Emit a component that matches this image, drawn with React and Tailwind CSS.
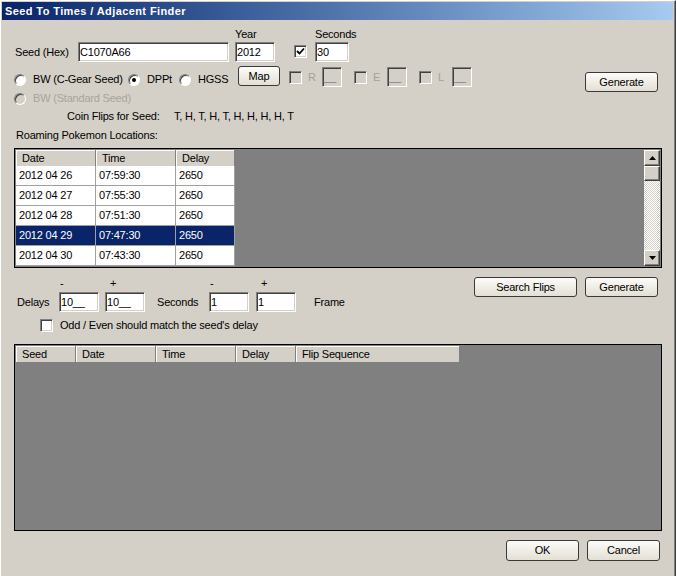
import React from 'react';

const sunken =
  'border border-t-[#808080] border-l-[#808080] border-b-white border-r-white shadow-[inset_1px_1px_0_#404040,inset_-1px_-1px_0_#d4d0c8]';
const raised =
  'border border-t-white border-l-white border-b-[#404040] border-r-[#404040] shadow-[inset_-1px_-1px_0_#808080]';

function TextBox({ className = '', value = '', disabled = false }) {
  return (
    <div
      className={`${sunken} h-[20px] flex items-center pl-[1px] whitespace-pre ${
        disabled ? 'bg-[#d4d0c8] text-[#808080]' : 'bg-white'
      } ${className}`}
    >
      {value}
    </div>
  );
}

function Button({ className = '', children }) {
  return (
    <div
      className={`flex items-center justify-center rounded-[3px] border border-[#3a3a3a] bg-linear-to-b from-[#fdfcfa] to-[#e3dfd4] ${className}`}
    >
      {children}
    </div>
  );
}

function CheckBox({ checked = false, disabled = false }) {
  return (
    <div
      className={`${sunken} w-[13px] h-[13px] flex items-center justify-center shrink-0 ${
        disabled ? 'bg-[#d4d0c8]' : 'bg-white'
      }`}
    >
      {checked && (
        <svg width="9" height="9" viewBox="0 0 9 9">
          <path d="M1 4 L3.5 6.5 L8 1.5" fill="none" stroke="#000" strokeWidth="1.8" />
        </svg>
      )}
    </div>
  );
}

function Radio({ className = '', label, checked = false, disabled = false }) {
  return (
    <div className={`flex items-center h-[13px] ${className}`}>
      <div
        className={`w-[12px] h-[12px] rounded-full border border-t-[#808080] border-l-[#808080] border-b-white border-r-white shadow-[inset_1px_1px_0_#404040] flex items-center justify-center shrink-0 ${
          disabled ? 'bg-[#d4d0c8]' : 'bg-white'
        }`}
      >
        {checked && <div className="w-[4px] h-[4px] rounded-full bg-black" />}
      </div>
      <span className={`ml-[7px] whitespace-nowrap ${disabled ? 'text-[#a7a49c]' : ''}`}>{label}</span>
    </div>
  );
}

function HeaderCell({ className = '', children }) {
  return (
    <div
      className={`h-[16px] shrink-0 flex items-center pl-[6px] bg-[#d4d0c8] border-r border-r-[#808080] shadow-[inset_1px_1px_0_#ffffff] ${className}`}
    >
      {children}
    </div>
  );
}

function Arrow({ up }) {
  return (
    <div className={`${raised} h-[16px] bg-[#d4d0c8] flex items-center justify-center shrink-0`}>
      <svg width="7" height="4" viewBox="0 0 7 4">
        <polygon points={up ? '3.5,0 7,4 0,4' : '0,0 7,0 3.5,4'} fill="#000" />
      </svg>
    </div>
  );
}

const roaming = [
  ['2012 04 26', '07:59:30', '2650'],
  ['2012 04 27', '07:55:30', '2650'],
  ['2012 04 28', '07:51:30', '2650'],
  ['2012 04 29', '07:47:30', '2650'],
  ['2012 04 30', '07:43:30', '2650'],
];

export default function App() {
  return (
    <div className="w-[676px] h-[576px] overflow-hidden bg-[#d4d0c8] border-l border-t border-r border-l-white border-t-white border-r-[#404040] font-['Liberation_Sans',Arial,sans-serif] text-[11px] leading-[13px] tracking-[-0.2px] text-black">
      <div className="h-full border-r border-r-[#808080] pt-[1px] pl-[1px] pr-[1px]">
        {/* Title bar */}
        <div className="h-[18px] flex items-center pl-[3px] bg-linear-to-r from-[#0a246a] to-[#a6caf0] text-white font-bold tracking-[0.4px]">
          Seed To Times / Adjacent Finder
        </div>

        {/* Seed / Year / Seconds */}
        <div className="mt-[8px] flex items-end">
          <div className="ml-[13px] w-[63px] h-[20px] flex items-center">Seed (Hex)</div>
          <TextBox className="w-[151px]" value="C1070A66" />
          <div className="ml-[6px] flex flex-col">
            <div className="h-[14px]">Year</div>
            <TextBox className="w-[40px]" value="2012" />
          </div>
          <div className="ml-[19px] mb-[4px]">
            <CheckBox checked />
          </div>
          <div className="ml-[8px] flex flex-col">
            <div className="h-[14px]">Seconds</div>
            <TextBox className="w-[34px]" value="30" />
          </div>
        </div>

        {/* Game selection */}
        <div className="mt-[4px] flex items-start">
          <Radio className="ml-[12px] mt-[7px] w-[114px]" label="BW (C-Gear Seed)" />
          <Radio className="mt-[7px] w-[51px]" label="DPPt" checked />
          <Radio className="mt-[7px] w-[59px]" label="HGSS" />
          <Button className="w-[42px] h-[20px]">Map</Button>
          {['R', 'E', 'L'].map((l, i) => (
            <React.Fragment key={l}>
              <div className={`mt-[5px] w-[33px] flex items-center ${i === 0 ? 'ml-[9px]' : 'ml-[12px]'}`}>
                <CheckBox disabled />
                <span className="ml-[6px] text-[#a0a0a0]">{l}</span>
              </div>
              <TextBox className="mt-[1px] w-[20px]" disabled value="__" />
            </React.Fragment>
          ))}
          <Button className="ml-[113px] mt-[6px] w-[73px] h-[20px]">Generate</Button>
        </div>

        <div className="flex items-center h-[13px]">
          <Radio className="ml-[12px]" label="BW (Standard Seed)" disabled />
        </div>

        <div className="mt-[5px] flex h-[13px]">
          <div className="ml-[65px] w-[107px] shrink-0">Coin Flips for Seed:</div>
          <div>T, H, T, H, T, H, H, H, H, T</div>
        </div>

        <div className="mt-[6px] ml-[14px] h-[13px]">Roaming Pokemon Locations:</div>

        {/* Roaming list */}
        <div className="mt-[6px] ml-[12px] w-[648px] h-[120px] border border-black bg-[#808080] p-[1px] flex">
          <div className="flex-1">
            <div className="flex">
              <HeaderCell className="w-[80px]">Date</HeaderCell>
              <HeaderCell className="w-[80px]">Time</HeaderCell>
              <HeaderCell className="w-[59px]">Delay</HeaderCell>
            </div>
            {roaming.map((r, i) => {
              const sel = i === 3;
              return (
                <div key={r[0]} className={`flex w-[219px] ${sel ? 'bg-[#0a246a] text-white' : 'bg-white'}`}>
                  <div className="w-[80px] h-[20px] pl-[3px] flex items-center border-r border-b border-[#a0a0a0]">{r[0]}</div>
                  <div className="w-[80px] h-[20px] pl-[3px] flex items-center border-r border-b border-[#a0a0a0]">{r[1]}</div>
                  <div className="w-[59px] h-[20px] pl-[3px] flex items-center border-r border-b border-[#a0a0a0]">{r[2]}</div>
                </div>
              );
            })}
          </div>
          <div className="w-[16px] h-full flex flex-col">
            <Arrow up />
            <div className={`${raised} h-[15px] bg-[#d4d0c8] shrink-0`} />
            <div className="flex-1 bg-[image:repeating-conic-gradient(#d4d0c8_0_25%,#ffffff_0_50%)] bg-[length:2px_2px]" />
            <Arrow />
          </div>
        </div>

        {/* Delay / seconds window */}
        <div className="mt-[9px] flex items-start">
          <div className="w-[472px] flex flex-col">
            <div className="h-[15px] flex">
              <span className="ml-[58px] w-[50px]">-</span>
              <span className="w-[100px]">+</span>
              <span className="w-[51px]">-</span>
              <span>+</span>
            </div>
            <div className="h-[20px] flex items-center">
              <span className="ml-[15px] w-[42px]">Delays</span>
              <TextBox className="w-[40px]" value="10__" />
              <TextBox className="ml-[6px] w-[40px]" value="10__" />
              <span className="ml-[12px] w-[52px]">Seconds</span>
              <TextBox className="w-[40px]" value="1" />
              <TextBox className="ml-[7px] w-[40px]" value="1" />
              <span className="ml-[18px]">Frame</span>
            </div>
          </div>
          <Button className="w-[103px] h-[20px]">Search Flips</Button>
          <Button className="ml-[8px] w-[73px] h-[20px]">Generate</Button>
        </div>

        <div className="mt-[7px] flex items-center h-[13px]">
          <div className="ml-[38px]">
            <CheckBox />
          </div>
          <span className="ml-[7px]">Odd / Even should match the seed's delay</span>
        </div>

        {/* Results list */}
        <div className="mt-[12px] ml-[12px] w-[648px] h-[187px] border border-black bg-[#808080] p-[1px]">
          <div className="flex">
            <HeaderCell className="w-[60px]">Seed</HeaderCell>
            <HeaderCell className="w-[80px]">Date</HeaderCell>
            <HeaderCell className="w-[80px]">Time</HeaderCell>
            <HeaderCell className="w-[60px]">Delay</HeaderCell>
            <HeaderCell className="w-[164px]">Flip Sequence</HeaderCell>
          </div>
        </div>

        <div className="mt-[9px] flex">
          <Button className="ml-[504px] w-[73px] h-[21px]">OK</Button>
          <Button className="ml-[8px] w-[73px] h-[21px]">Cancel</Button>
        </div>
      </div>
    </div>
  );
}
